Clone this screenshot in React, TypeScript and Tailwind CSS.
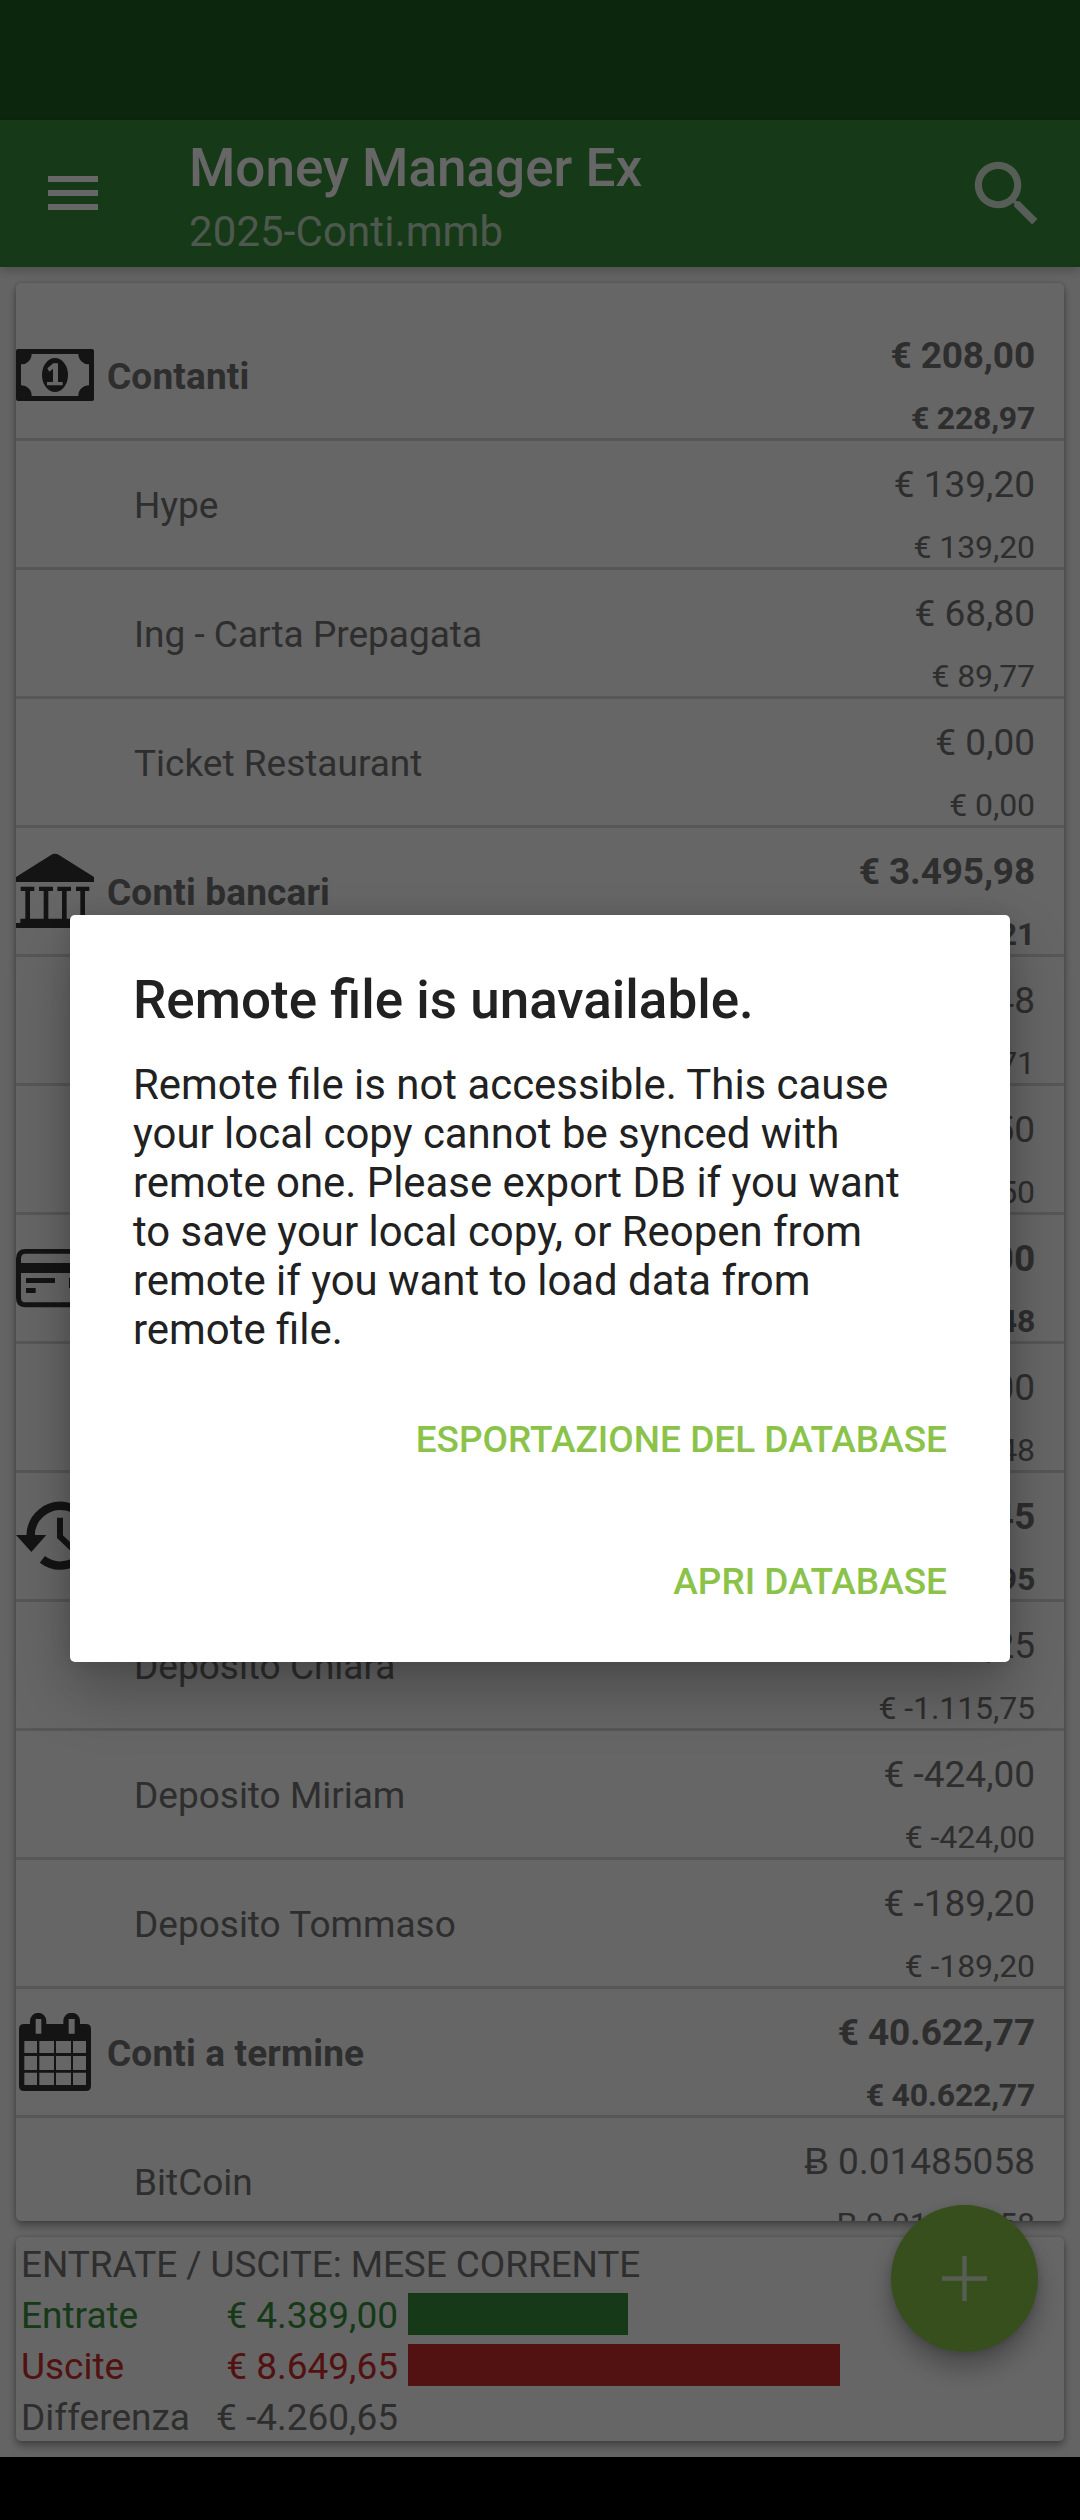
import type { ReactNode } from "react";

type Row = {
  name: string;
  amount: string;
  reconciled: string;
  icon?: ReactNode;
};

const CashIcon = (
  <svg viewBox="48 48 234 234" className="size-[78px]" fill="#333">
    <path
      fillRule="evenodd"
      d="M54 87H276Q282 87 282 93V237Q282 243 276 243H54Q48 243 48 237V93Q48 87 54 87ZM95 102A31 31 0 0 1 63 133V196A31 31 0 0 1 95 228H235A31 31 0 0 1 267 196V133A31 31 0 0 1 235 102Z"
    />
    <ellipse cx="165" cy="165" rx="39" ry="51" />
    <path fill="#fff" d="M160 130H174V186H188V196H141V186H159V146L148 155L142 145Z" />
  </svg>
);

const BankIcon = (
  <svg viewBox="48 66 234 234" className="size-[78px]" fill="#333">
    <path d="M48 141L153 75Q158 71 165 71Q172 71 177 75L282 141V156H48Z" />
    <path d="M62 170H103V183H90V266H131V183H117V170H159V183H145V266H186V183H172V170H213V183H200V266H241V183H228V170H268V183H255V266H268V279H282V294H48V279H61V266H76V183H62Z" />
  </svg>
);

const CardIcon = (
  <svg viewBox="48 57 234 234" className="size-[78px]" fill="#333">
    <path
      fillRule="evenodd"
      d="M77 87H253Q282 87 282 116V233Q282 262 253 262H77Q48 262 48 233V116Q48 87 77 87ZM77 101Q63 101 63 116V129H267V116Q267 101 253 101ZM63 159V233Q63 247 77 247H253Q267 247 267 233V159Z"
    />
    <path d="M78 174H165V189H78ZM78 204H107V219H78ZM207 174H252V204H207Z" />
  </svg>
);

const HistoryIcon = (
  <svg viewBox="48 831 234 234" className="size-[78px]" fill="none" stroke="#333">
    <path strokeWidth="25" d="M92 947A89.500 89.500 0 1 1 127 1018" />
    <path stroke="none" fill="#333" d="M48 945H139L94 996Z" />
    <path strokeWidth="18" d="M180 893V950L222 990" />
  </svg>
);

const CalendarIcon = (
  <svg viewBox="48 99 234 234" className="size-[78px]" fill="#333">
    <path
      fillRule="evenodd"
      d="M90 132V123A24.500 24.500 0 0 1 139 123V132H190V123A25 25 0 0 1 240 123V132H258Q273 132 273 147V318Q273 333 258 333H72Q57 333 57 318V147Q57 132 72 132ZM107 117V161H124V117ZM206 117V161H224V117ZM73 183V219H111V183ZM118 183V219H162V183ZM168 183V219H213V183ZM219 183V219H258V183ZM73 228V270H111V228ZM118 228V270H162V228ZM168 228V270H213V228ZM219 228V270H258V228ZM73 278V315H111V278ZM118 278V315H162V278ZM168 278V315H213V278ZM219 278V315H258V278Z"
    />
  </svg>
);

const rows: Row[] = [
  { name: "Contanti", amount: "€ 208,00", reconciled: "€ 228,97", icon: CashIcon },
  { name: "Hype", amount: "€ 139,20", reconciled: "€ 139,20" },
  { name: "Ing - Carta Prepagata", amount: "€ 68,80", reconciled: "€ 89,77" },
  { name: "Ticket Restaurant", amount: "€ 0,00", reconciled: "€ 0,00" },
  { name: "Conti bancari", amount: "€ 3.495,98", reconciled: "21", icon: BankIcon },
  { name: "", amount: "48", reconciled: "71" },
  { name: "", amount: "50", reconciled: "50" },
  { name: "", amount: "00", reconciled: "48", icon: CardIcon },
  { name: "", amount: "00", reconciled: "48" },
  { name: "", amount: "45", reconciled: "95", icon: HistoryIcon },
  { name: "Deposito Chiara", amount: ",25", reconciled: "€ -1.115,75" },
  { name: "Deposito Miriam", amount: "€ -424,00", reconciled: "€ -424,00" },
  { name: "Deposito Tommaso", amount: "€ -189,20", reconciled: "€ -189,20" },
  { name: "Conti a termine", amount: "€ 40.622,77", reconciled: "€ 40.622,77", icon: CalendarIcon },
  { name: "BitCoin", amount: "Ƀ 0.01485058", reconciled: "Ƀ 0.01485058" },
];

function AccountRow({ row }: { row: Row }) {
  const group = row.icon !== undefined;
  return (
    <div
      className={`flex h-[129px] shrink-0 items-center border-b-[3px] border-[#dadada] pr-[29px] text-[37px] leading-[43px] ${
        group ? "font-bold" : ""
      }`}
    >
      {row.icon}
      <div className={`flex-1 pt-[2px] ${group ? "pl-[13px] tracking-[0.15px]" : "pl-[118px]"}`}>{row.name}</div>
      <div className={`flex flex-col items-end self-start pt-[22px] ${group ? "tracking-[-0.15px]" : ""}`}>
        <div>{row.amount}</div>
        <div className={`mt-[23px] text-[32px] leading-[37px] ${group ? "tracking-[-0.25px]" : "tracking-[-0.08px]"}`}>
          {row.reconciled}
        </div>
      </div>
    </div>
  );
}

const cardShadow = "shadow-[0_5px_8px_rgba(0,0,0,0.32),0_0_4px_rgba(0,0,0,0.18)]";

function SummaryRow({ label, value, color, bar }: { label: string; value: string; color: string; bar?: string }) {
  return (
    <div className={`flex h-[51px] items-start ${color}`}>
      <div className="w-[150px]">{label}</div>
      <div className="w-[227px] text-right">{value}</div>
      {bar && <div className={`mt-[3px] ml-[10px] h-[42px] ${bar}`} />}
    </div>
  );
}

export default function App() {
  return (
    <div className="relative flex h-[2520px] w-[1080px] flex-col overflow-hidden bg-[#fafafa] font-['Roboto',sans-serif] text-[#737373]">
      <div className="h-[120px] shrink-0 bg-[#1e6022]" />
      <header className="z-10 flex h-[147px] shrink-0 items-center bg-[#388e3c] pr-[30px] pl-[48px] shadow-[0_4px_10px_rgba(0,0,0,0.2)]">
        <div className="-mt-px flex w-[50px] flex-col gap-[8px]">
          <div className="h-[6px] bg-white" />
          <div className="h-[6px] bg-white" />
          <div className="h-[6px] bg-white" />
        </div>
        <div className="ml-[91px] flex-1 self-start pt-[17px]">
          <div className="text-[53px] leading-[62px] font-medium text-white">Money Manager Ex</div>
          <div className="mt-[8px] text-[42px] leading-[49px] font-normal tracking-[0.1px] text-white/70">2025-Conti.mmb</div>
        </div>
        <svg viewBox="0 0 24 24" className="size-[86px]" fill="#d9e8da">
          <path d="M15.500 14h-.79l-.28-.27A6.471 6.471 0 0 0 16 9.500 6.500 6.500 0 1 0 9.500 16c1.610 0 3.090-.59 4.230-1.570l.27.28v.79l5 4.990L20.490 19l-4.990-5zm-6 0C7.010 14 5 11.990 5 9.500S7.010 5 9.500 5 14 7.010 14 9.500 11.990 14 9.500 14z" />
        </svg>
      </header>

      <main className="flex flex-1 flex-col gap-[16px] px-[16px] pt-[16px]">
        <div className={`h-[1938px] shrink-0 rounded-[5px] bg-white ${cardShadow}`}>
          <div className="flex h-full flex-col overflow-hidden rounded-[5px] pt-[29px]">
            {rows.map((row, i) => (
              <AccountRow key={i} row={row} />
            ))}
          </div>
        </div>

        <div className={`h-[204px] shrink-0 rounded-[5px] bg-white pt-[2px] pl-[5px] text-[37px] leading-[51px] ${cardShadow}`}>
          <div className="tracking-[-0.08px]">ENTRATE / USCITE: MESE CORRENTE</div>
          <SummaryRow label="Entrate" value="€ 4.389,00" color="text-[#388e3c]" bar="w-[220px] bg-[#388e3c]" />
          <SummaryRow label="Uscite" value="€ 8.649,65" color="text-[#cc2e2e]" bar="w-[432px] bg-[#cc2e2e]" />
          <SummaryRow label="Differenza" value="€ -4.260,65" color="text-[#737373]" />
        </div>
      </main>

      <div className="z-10 h-[63px] shrink-0 bg-black" />

      <button className="absolute top-[2205px] left-[891px] flex size-[147px] items-center justify-center rounded-full bg-[#8bc34a] shadow-[0_16px_26px_rgba(0,0,0,0.28),0_2px_8px_rgba(0,0,0,0.15)]">
        <svg viewBox="0 0 45 45" className="size-[45px]" stroke="#dce8d0" strokeWidth="4.300">
          <path d="M22.500 0V45M0 22.500H45" />
        </svg>
      </button>

      <div className="absolute inset-0 z-20 bg-black/60">
        <div
          role="dialog"
          className="absolute top-[915px] left-[70px] flex h-[747px] w-[940px] flex-col rounded-[5px] bg-white px-[63px] text-[#212121] shadow-[0_30px_60px_rgba(0,0,0,0.26),0_0_20px_rgba(0,0,0,0.12)]"
        >
          <h1 className="pt-[54px] text-[53px] leading-[62px] font-medium">Remote file is unavailable.</h1>
          <p className="mt-[29px] text-[41.920px] leading-[49px]">
            Remote file is not accessible. This cause
            <br />
            your local copy cannot be synced with
            <br />
            remote one. Please export DB if you want
            <br />
            to save your local copy, or Reopen from
            <br />
            remote if you want to load data from
            <br />
            remote file.
          </p>
          <div className="mt-[64px] flex flex-col items-end gap-[99px] text-[37px] leading-[43px] font-medium text-[#8bc34a]">
            <button>ESPORTAZIONE DEL DATABASE</button>
            <button>APRI DATABASE</button>
          </div>
        </div>
      </div>
    </div>
  );
}
